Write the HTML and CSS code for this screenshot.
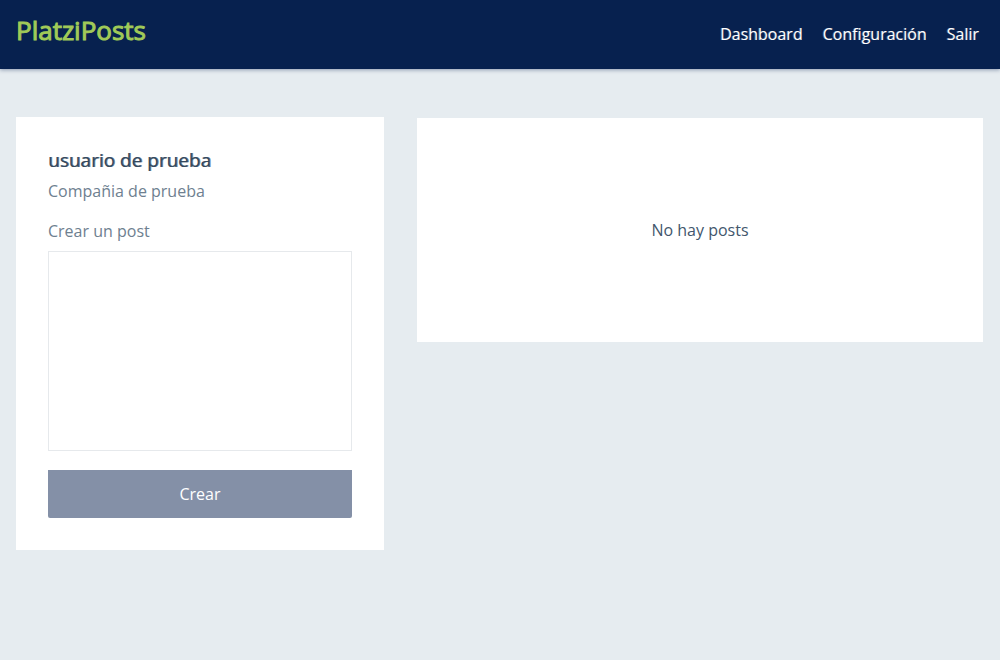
FILE: index.html
```html
<!DOCTYPE html>
<html lang="es">
<head>
<meta charset="utf-8">
<meta name="viewport" content="width=device-width, initial-scale=1">
<title>PlatziPosts</title>
<link rel="stylesheet" href="styles.css">
</head>
<body>
<header class="header">
  <h1 class="logo">PlatziPosts</h1>
  <nav class="nav">
    <a class="nav-link" href="#">Dashboard</a>
    <a class="nav-link" href="#">Configuración</a>
    <a class="nav-link" href="#">Salir</a>
  </nav>
</header>
<main class="main">
  <section class="profile">
    <h2 class="user">usuario de prueba</h2>
    <p class="company">Compañia de prueba</p>
    <form class="form">
      <label class="label" for="post">Crear un post</label>
      <textarea class="textarea" id="post"></textarea>
      <button class="button" type="submit" disabled>Crear</button>
    </form>
  </section>
  <section class="posts">
    <p class="empty">No hay posts</p>
  </section>
</main>
</body>
</html>
```

FILE: styles.css
```css
* {
  box-sizing: border-box;
}

body {
  margin: 0;
  min-height: 100vh;
  background: #e6ecf0;
  color: #42566c;
  font-family: "Open Sans", sans-serif;
  font-size: 16px;
  line-height: 24px;
}

h1, h2, p {
  margin: 0;
}

.header {
  display: flex;
  justify-content: space-between;
  align-items: center;
  padding: 12px 16px 21px;
  background: #07214f;
  box-shadow: 0 1px 4px rgba(7, 33, 79, 0.4);
}

.logo {
  color: #a0ca58;
  font-size: 26px;
  font-weight: 400;
  line-height: 36px;
  -webkit-text-stroke: 1px #a0ca58;
}

.nav {
  display: flex;
  gap: 20px;
  padding: 8px 5px 0 0;
}

.nav-link {
  color: #fff;
  text-decoration: none;
  text-shadow: -1px 0 rgba(255, 255, 255, 0.3);
}

.main {
  display: grid;
  grid-template-columns: minmax(0, 368fr) minmax(0, 566fr);
  gap: 33px;
  align-items: start;
  padding: 48px 17px 48px 16px;
}

.profile {
  padding: 32px;
  background: #fff;
}

.user {
  color: #34495e;
  font-size: 19px;
  font-weight: 400;
  line-height: 22px;
  text-shadow: 1px 0 rgba(52, 73, 94, 0.7);
}

.company {
  margin-top: 8px;
  color: #6e8090;
}

.form {
  display: flex;
  flex-direction: column;
  margin-top: 16px;
}

.label {
  color: #6e8090;
}

.textarea {
  height: 200px;
  margin-top: 8px;
  padding: 8px;
  border: 1px solid #e6e9ec;
  resize: none;
  font: inherit;
}

.button {
  height: 48px;
  margin-top: 19px;
  border: 0;
  border-radius: 0 0 2px 2px;
  background: #8490a7;
  color: #fff;
  font: inherit;
}

.posts {
  display: grid;
  place-items: center;
  margin-top: 1px;
  padding: 100px 32px;
  background: #fff;
}
```
